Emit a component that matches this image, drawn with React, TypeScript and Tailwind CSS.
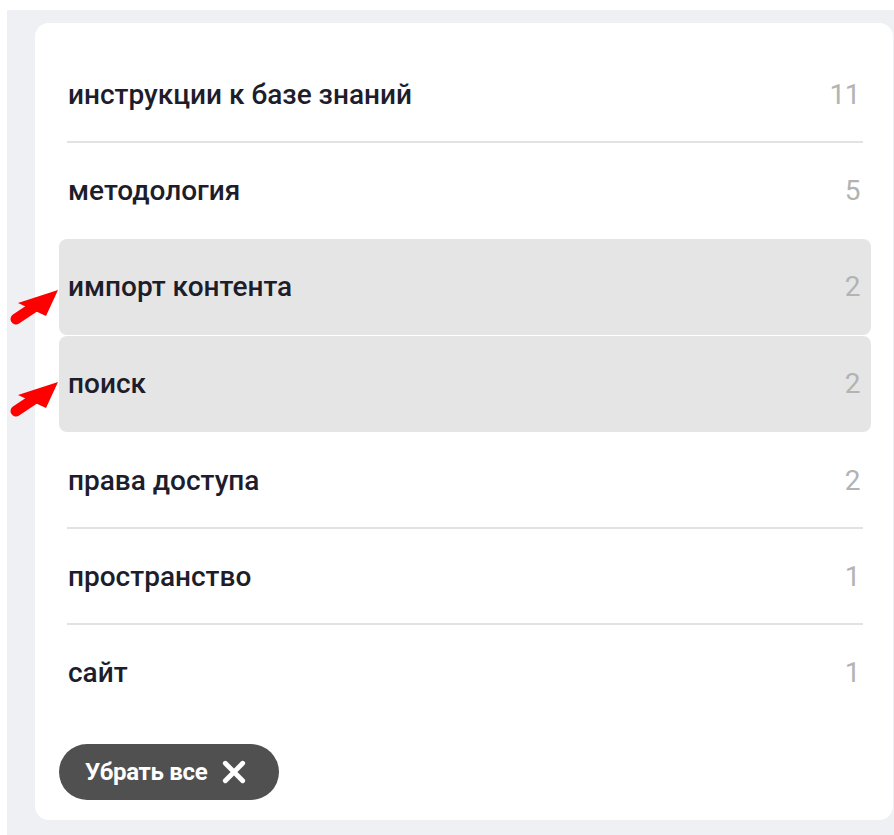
import React from "react";

type Tag = { name: string; count: number; active?: boolean };

const tags: Tag[] = [
  { name: "инструкции к базе знаний", count: 11 },
  { name: "методология", count: 5 },
  { name: "импорт контента", count: 2, active: true },
  { name: "поиск", count: 2, active: true },
  { name: "права доступа", count: 2 },
  { name: "пространство", count: 1 },
  { name: "сайт", count: 1 },
];

function Pointer({ top }: { top: number }) {
  // red pointer arrow that sits over the card edge
  return (
    <svg
      className="absolute left-[-7px]"
      style={{ top }}
      width="70"
      height="60"
      viewBox="0 0 70 60"
    >
      <line x1="16" y1="49" x2="34" y2="37" stroke="#ff0000" strokeWidth="11" strokeLinecap="round" />
      <polygon points="58,20 18,33 46,46" fill="#ff0000" />
    </svg>
  );
}

export default function App() {
  return (
    <div className="bg-white pt-[10px] pl-[7px] w-[894px] h-[835px] overflow-hidden" style={{ fontFamily: "Roboto, 'Noto Sans', sans-serif" }}>
      <div className="relative bg-[#eff0f4] pl-[28px] pt-[13px] h-[825px]">
        <div className="bg-white rounded-[14px] w-[858px] h-[797px] pl-[24px] pr-[22px] pt-[24px]">
          <div className="flex flex-col">
            {tags.map((t, i) => {
              const next = tags[i + 1];
              const showLine = !t.active && next && !next.active;
              return (
                <div key={t.name} className="relative">
                  <div
                    className={
                      "flex items-center justify-between h-[96px] pl-[9px] pr-[11px] rounded-[8px] " +
                      (t.active ? "bg-[#e5e5e5] mb-[1px]" : "")
                    }
                  >
                    <span className="text-[28px] font-medium text-[#1d1d2b]">{t.name}</span>
                    <span className="text-[28px] text-[#b3b3b3] tracking-[-0.5px]">{t.count}</span>
                  </div>
                  {showLine && (
                    <div className="absolute left-[8px] right-[8px] bottom-0 h-[2px] bg-[#e2e2e2]" />
                  )}
                </div>
              );
            })}
          </div>
          <button className="mt-[23px] flex items-center gap-[14px] h-[56px] w-[220px] rounded-full bg-[#505050] pl-[26px] text-white">
            <span className="text-[24px] font-bold tracking-[-0.3px]">Убрать все</span>
            <svg width="26" height="26" viewBox="0 0 24 24">
              <path d="M4 4 L20 20 M20 4 L4 20" stroke="#ffffff" strokeWidth="4.5" strokeLinecap="round" />
            </svg>
          </button>
        </div>
        <Pointer top={260} />
        <Pointer top={352} />
      </div>
    </div>
  );
}
